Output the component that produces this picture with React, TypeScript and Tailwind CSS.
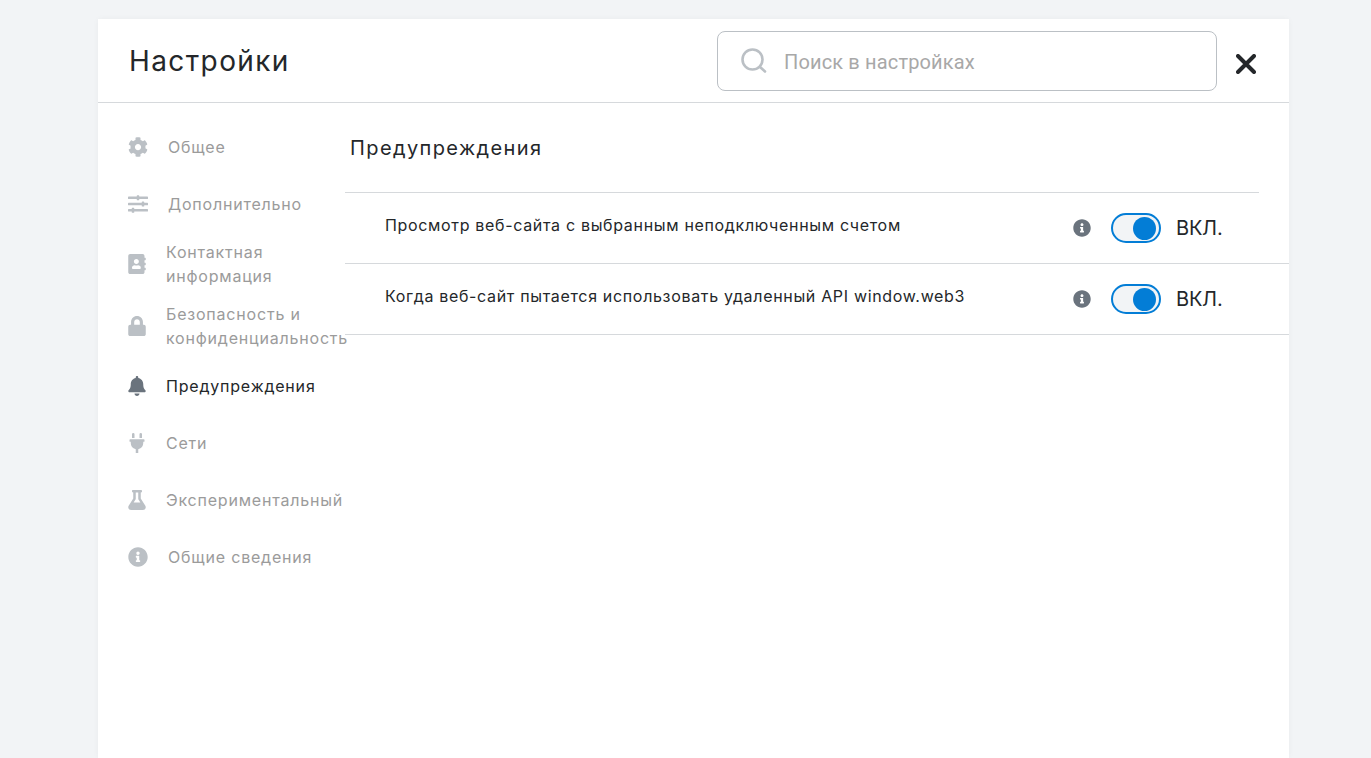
import { FaAddressBook, FaBell, FaCog, FaFlask, FaInfoCircle, FaLock, FaPlug, FaSlidersH } from "react-icons/fa";

const navItems = [
  { label: "Общее", Icon: FaCog, w: "w-[20px]" },
  { label: "Дополнительно", Icon: FaSlidersH, w: "w-[20px]", extra: "mb-[1px]" },
  { label: "Контактная информация", Icon: FaAddressBook, w: "w-[18px]" },
  { label: "Безопасность и конфиденциальность", Icon: FaLock, w: "w-[18px]" },
  { label: "Предупреждения", Icon: FaBell, w: "w-[18px]", active: true },
  { label: "Сети", Icon: FaPlug, w: "w-[18px]" },
  { label: "Экспериментальный", Icon: FaFlask, w: "w-[18px]" },
  { label: "Общие сведения", Icon: FaInfoCircle, w: "w-[20px]" },
];

const alerts = [
  "Просмотр веб-сайта с выбранным неподключенным счетом",
  "Когда веб-сайт пытается использовать удаленный API window.web3",
];

export default function App() {
  return (
    <div className="h-[758px] overflow-hidden bg-[#f2f4f6] px-[98px] pt-[19px] font-['Inter','Noto_Sans',sans-serif] text-[#24272a]">
      <div className="h-[739px] w-[1191px] bg-white shadow-[0_0_6px_rgba(0,0,0,0.04)]">
        {/* Шапка */}
        <header className="flex h-[84px] items-start border-b border-[#d6d9dc] pl-[31px]">
          <h1 className="mt-[23px] text-[28px] leading-[38px] tracking-[1.4px]">Настройки</h1>
          <div className="ml-auto mt-[12px] flex h-[60px] w-[500px] items-center rounded-[8px] border border-[#bbc0c5] pl-[22px]">
            <svg width="28" height="28" viewBox="0 0 28 28" fill="none" stroke="#bbc0c5" strokeWidth="2.6" strokeLinecap="round">
              <circle cx="12.5" cy="12.5" r="10" />
              <path d="M20 20l5 4.5" />
            </svg>
            <span className="ml-[16px] pt-[2px] font-['Roboto',sans-serif] text-[20px] tracking-[0.15px] text-[#a8a8a8]">Поиск в настройках</span>
          </div>
          <button className="ml-[19px] mr-[33px] mt-[35px] text-[#24272a]">
            <svg width="20" height="20" viewBox="0 0 20 20" fill="none" stroke="currentColor" strokeWidth="4" strokeLinecap="round">
              <path d="M2 2l16 16M18 2L2 18" />
            </svg>
          </button>
        </header>

        <div className="flex">
          {/* Меню */}
          <nav className="w-[247px] shrink-0 pl-[30px] pt-[15px]">
            {navItems.map(({ label, Icon, w, active, extra }) => (
              <div key={label} className={`flex min-h-[57px] items-center py-[7px] ${extra ?? ""}`}>
                <Icon className={`h-[20px] ${w} shrink-0 ${active ? "text-[#6a737d]" : "text-[#bbc0c5]"}`} />
                <span className={`ml-[20px] w-[170px] text-[16px] leading-[24px] tracking-[0.8px] ${active ? "text-[#24272a]" : "text-[#9b9b9b]"}`}>
                  {label}
                </span>
              </div>
            ))}
          </nav>

          {/* Содержимое */}
          <main className="flex-1">
            <h2 className="h-[89px] pl-[5px] pt-[29px] text-[20px] leading-[32px] tracking-[1.4px]">Предупреждения</h2>
            <div className="mr-[30px] border-b border-[#d6d9dc]" />
            {alerts.map((text) => (
              <div key={text} className="flex h-[71px] items-start border-b border-[#d6d9dc] pl-[40px]">
                <p className="pt-[20px] text-[16px] leading-[24px] tracking-[0.67px] text-[#24272a]">{text}</p>
                <div className="ml-auto flex items-center pr-[67px] pt-[20px]">
                  <FaInfoCircle className="-mt-[1px] h-[18px] w-[18px] text-[#6a737d]" />
                  <div className="ml-[20px] flex h-[30px] w-[50px] items-center justify-end rounded-full border-2 border-[#037dd6] bg-[#f2f4f6] pr-[3px]">
                    <div className="h-[23px] w-[23px] rounded-full bg-[#037dd6]" />
                  </div>
                  <span className="ml-[15px] w-[46px] text-[20px] leading-[30px] tracking-[-0.2px]">ВКЛ.</span>
                </div>
              </div>
            ))}
          </main>
        </div>
      </div>
    </div>
  );
}
